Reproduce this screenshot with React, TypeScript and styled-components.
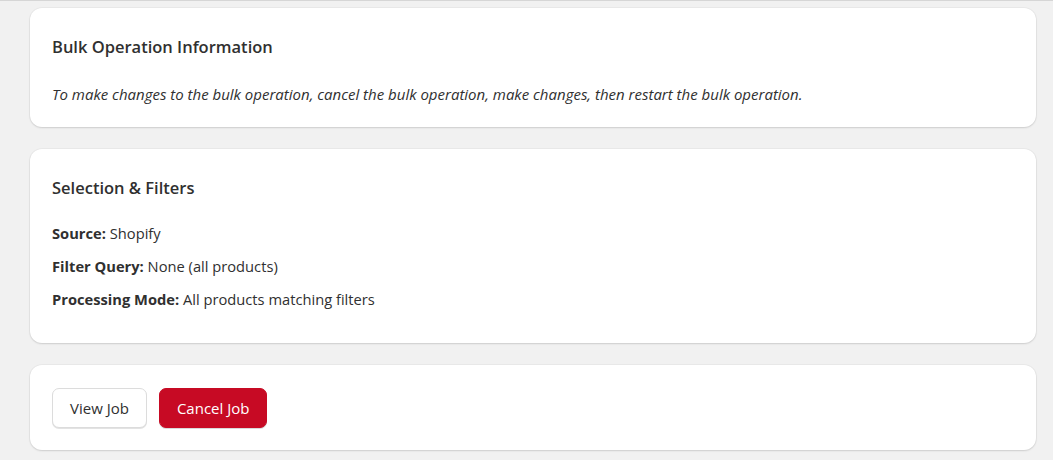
import React from "react";
import styled, { createGlobalStyle } from "styled-components";

const GlobalStyle = createGlobalStyle`
  html, body {
    margin: 0;
    padding: 0;
    background: #f1f1f1;
  }
  body {
    font-family: "Open Sans", "Noto Sans", sans-serif;
    color: #303030;
  }
`;

const Page = styled.div`
  border-top: 1px solid #d6d6d6;
  padding: 7px 17px 10px 30px;
  display: flex;
  flex-direction: column;
  gap: 22px;
`;

const Card = styled.section<{ $compact?: boolean }>`
  background: #ffffff;
  border-radius: 12px;
  box-shadow: 0 1px 2px rgba(0, 0, 0, 0.12), 0 0 0 1px rgba(0, 0, 0, 0.03);
  padding: ${(p) => (p.$compact ? "23px 22px 22px" : "27px 22px 23px")};
`;

const Title = styled.h2`
  margin: 0 0 ${(p: { $gap?: number }) => p.$gap ?? 24}px;
  font-size: 16.5px;
  line-height: 24px;
  font-weight: 600;
  color: #303030;
`;

const Note = styled.p`
  margin: 0;
  font-size: 15px;
  line-height: 20px;
  font-style: italic;
  color: #303030;
`;

const InfoRow = styled.p`
  margin: 0 0 12px;
  font-size: 14.7px;
  line-height: 21px;
  color: #303030;

  &:last-child {
    margin-bottom: 10px;
  }

  b {
    font-weight: 700;
  }
`;

const Actions = styled.div`
  display: flex;
  gap: 12px;
`;

const Button = styled.button<{ $primary?: boolean }>`
  height: 40px;
  padding: 0 17px;
  border-radius: 7px;
  font-family: inherit;
  font-size: 15px;
  cursor: pointer;
  border: 1px solid ${(p) => (p.$primary ? "#c70a24" : "#dcdcdc")};
  background: ${(p) => (p.$primary ? "#c70a24" : "#ffffff")};
  color: ${(p) => (p.$primary ? "#ffffff" : "#303030")};
  box-shadow: 0 1px 0 ${(p) => (p.$primary ? "rgba(0,0,0,0.15)" : "#e3e3e3")};
`;

const App = () => {
  return (
    <>
      <GlobalStyle />
      <Page>
        <Card>
          <Title $gap={25}>Bulk Operation Information</Title>
          <Note>
            To make changes to the bulk operation, cancel the bulk operation, make changes, then restart the bulk
            operation.
          </Note>
        </Card>

        <Card>
          <Title $gap={23}>Selection &amp; Filters</Title>
          <InfoRow>
            <b>Source:</b> Shopify
          </InfoRow>
          <InfoRow>
            <b>Filter Query:</b> None (all products)
          </InfoRow>
          <InfoRow>
            <b>Processing Mode:</b> All products matching filters
          </InfoRow>
        </Card>

        <Card $compact>
          <Actions>
            <Button>View Job</Button>
            <Button $primary>Cancel Job</Button>
          </Actions>
        </Card>
      </Page>
    </>
  );
};

export default App;
